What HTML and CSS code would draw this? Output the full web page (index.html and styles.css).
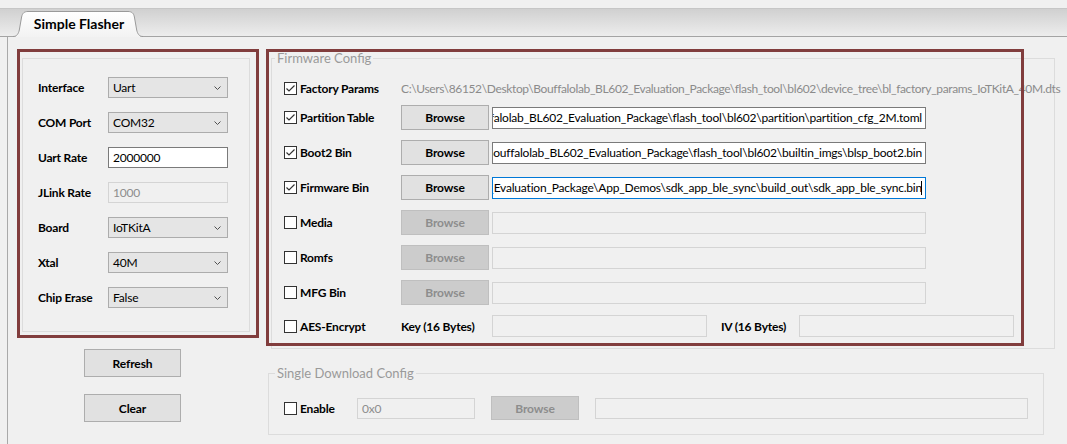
FILE: index.html
```html
<!DOCTYPE html>
<html lang="en">
<head>
<meta charset="utf-8">
<title>Simple Flasher</title>
<link rel="stylesheet" href="styles.css">
</head>
<body>
<div class="tabbar">
  <div class="tab">
    <svg class="tab-shape" width="130" height="26" viewBox="0 0 130 26">
      <defs>
        <linearGradient id="tg" x1="0" y1="0" x2="0" y2="1">
          <stop offset="0" stop-color="#ffffff"/>
          <stop offset="1" stop-color="#f2f2f2"/>
        </linearGradient>
      </defs>
      <path d="M0 26 C4 26 5.5 22.5 6.3 19 L8.6 6 C9.4 2 11.5 0.5 15 0.5 L115 0.5 C118.5 0.5 120.6 2 121.4 6 L123.7 19 C124.5 22.5 126 26 130 26 Z" fill="url(#tg)"/>
      <path d="M0 25.5 C4 25.5 5.5 22.5 6.3 19 L8.6 6 C9.4 2 11.5 0.5 15 0.5 L115 0.5 C118.5 0.5 120.6 2 121.4 6 L123.7 19 C124.5 22.5 126 25.5 130 25.5" fill="none" stroke="#9a9a9a"/>
    </svg>
    <span class="tab-label">Simple Flasher</span>
  </div>
</div>

<div class="pane">
  <div class="left-col">
    <div class="mark-box">
      <div class="group settings">
        <div class="field"><span class="lbl">Interface</span><div class="combo"><span>Uart</span><svg class="chev" width="7" height="4" viewBox="0 0 7 4"><polyline points="0.5,0.5 3.5,3.5 6.5,0.5"/></svg></div></div>
        <div class="field"><span class="lbl">COM Port</span><div class="combo"><span>COM32</span><svg class="chev" width="7" height="4" viewBox="0 0 7 4"><polyline points="0.5,0.5 3.5,3.5 6.5,0.5"/></svg></div></div>
        <div class="field"><span class="lbl">Uart Rate</span><div class="inp combo-w"><span class="txt">2000000</span></div></div>
        <div class="field"><span class="lbl">JLink Rate</span><div class="inp combo-w disabled"><span class="txt">1000</span></div></div>
        <div class="field"><span class="lbl">Board</span><div class="combo"><span>IoTKitA</span><svg class="chev" width="7" height="4" viewBox="0 0 7 4"><polyline points="0.5,0.5 3.5,3.5 6.5,0.5"/></svg></div></div>
        <div class="field"><span class="lbl">Xtal</span><div class="combo"><span>40M</span><svg class="chev" width="7" height="4" viewBox="0 0 7 4"><polyline points="0.5,0.5 3.5,3.5 6.5,0.5"/></svg></div></div>
        <div class="field"><span class="lbl">Chip Erase</span><div class="combo"><span>False</span><svg class="chev" width="7" height="4" viewBox="0 0 7 4"><polyline points="0.5,0.5 3.5,3.5 6.5,0.5"/></svg></div></div>
      </div>
    </div>
    <div class="actions">
      <button class="btn">Refresh</button>
      <button class="btn">Clear</button>
    </div>
  </div>

  <div class="right-col">
    <div class="group fw">
      <div class="group-title">Firmware Config</div>
      <div class="fw-body">
        <div class="row row-first">
          <div class="chk"><span class="box"><svg width="11" height="11" viewBox="0 0 11 11"><polyline points="1.5,5.5 4,8 9.5,2.5"/></svg></span><span class="chk-lbl">Factory Params</span></div>
          <span class="path-text">C:\Users\86152\Desktop\Bouffalolab_BL602_Evaluation_Package\flash_tool\bl602\device_tree\bl_factory_params_IoTKitA_40M.dts</span>
        </div>
        <div class="row">
          <div class="chk"><span class="box"><svg width="11" height="11" viewBox="0 0 11 11"><polyline points="1.5,5.5 4,8 9.5,2.5"/></svg></span><span class="chk-lbl">Partition Table</span></div>
          <button class="btn browse">Browse</button>
          <div class="inp path"><span class="txt">C:\Users\86152\Desktop\Bouffalolab_BL602_Evaluation_Package\flash_tool\bl602\partition\partition_cfg_2M.toml</span></div>
        </div>
        <div class="row">
          <div class="chk"><span class="box"><svg width="11" height="11" viewBox="0 0 11 11"><polyline points="1.5,5.5 4,8 9.5,2.5"/></svg></span><span class="chk-lbl">Boot2 Bin</span></div>
          <button class="btn browse">Browse</button>
          <div class="inp path"><span class="txt">C:\Users\86152\Desktop\Bouffalolab_BL602_Evaluation_Package\flash_tool\bl602\builtin_imgs\blsp_boot2.bin</span></div>
        </div>
        <div class="row">
          <div class="chk"><span class="box"><svg width="11" height="11" viewBox="0 0 11 11"><polyline points="1.5,5.5 4,8 9.5,2.5"/></svg></span><span class="chk-lbl">Firmware Bin</span></div>
          <button class="btn browse">Browse</button>
          <div class="inp path focus"><span class="txt">C:\Users\86152\Desktop\Bouffalolab_BL602_Evaluation_Package\App_Demos\sdk_app_ble_sync\build_out\sdk_app_ble_sync.bin</span><span class="caret"></span></div>
        </div>
        <div class="row">
          <div class="chk"><span class="box"></span><span class="chk-lbl">Media</span></div>
          <button class="btn browse off">Browse</button>
          <div class="inp path disabled"></div>
        </div>
        <div class="row">
          <div class="chk"><span class="box"></span><span class="chk-lbl">Romfs</span></div>
          <button class="btn browse off">Browse</button>
          <div class="inp path disabled"></div>
        </div>
        <div class="row">
          <div class="chk"><span class="box"></span><span class="chk-lbl">MFG Bin</span></div>
          <button class="btn browse off">Browse</button>
          <div class="inp path disabled"></div>
        </div>
        <div class="row row-aes">
          <div class="chk"><span class="box"></span><span class="chk-lbl">AES-Encrypt</span></div>
          <span class="key-lbl">Key (16 Bytes)</span>
          <div class="inp key disabled"></div>
          <span class="iv-lbl">IV (16 Bytes)</span>
          <div class="inp key disabled"></div>
        </div>
      </div>
      <div class="mark-overlay"></div>
    </div>

    <div class="group single">
      <div class="group-title">Single Download Config</div>
      <div class="single-body">
        <div class="row row-single">
          <div class="chk chk-single"><span class="box"></span><span class="chk-lbl">Enable</span></div>
          <div class="inp addr disabled"><span class="txt">0x0</span></div>
          <button class="btn browse off">Browse</button>
          <div class="inp spath disabled"></div>
        </div>
      </div>
    </div>
  </div>
</div>
</body>
</html>
```

FILE: styles.css
```css
* { box-sizing: border-box; }

html, body {
  margin: 0;
  padding: 0;
  background: #f0f0f0;
  overflow: hidden;
}

body {
  font-family: Lato, "Liberation Sans", sans-serif;
  font-size: 12px;
  letter-spacing: -0.2px;
  color: #000;
  width: 1067px;
  height: 444px;
}

/* ---------- tab bar ---------- */
.tabbar {
  margin-top: 8px;
  height: 29px;
  border-top: 1px solid #c6c6c6;
  border-bottom: 1px solid #a4a4a4;
  background: linear-gradient(#d0d0d0, #ededed);
  display: flex;
  align-items: flex-end;
  padding-left: 13px;
}

.tab {
  position: relative;
  width: 130px;
  height: 26px;
  margin-bottom: -1px;
  display: flex;
  align-items: center;
  justify-content: center;
}

.tab-shape {
  position: absolute;
  left: 0;
  top: 0;
}

.tab-label {
  position: relative;
  font-weight: 700;
  font-size: 14px;
  letter-spacing: 0;
  padding-bottom: 2px;
  margin-left: 2px;
}

/* ---------- pane ---------- */
.pane {
  margin-left: 7px;
  border-left: 1px solid #a9a9a9;
  height: 407px;
  display: flex;
  align-items: flex-start;
  padding: 12px 0 0 9px;
  gap: 12px;
}

.left-col {
  width: 242px;
  flex: none;
}

.mark-box {
  border: 3px solid #813d3d;
  padding: 6px 6px 3px 2px;
}

.group {
  border: 1px solid #dcdcdc;
}

.settings {
  width: 228px;
  padding: 18px 0 23px 15px;
  display: flex;
  flex-direction: column;
  gap: 14px;
}

.field {
  display: flex;
  align-items: center;
  height: 21px;
}

.lbl {
  width: 70px;
  font-weight: 700;
}

.combo {
  width: 120px;
  height: 21px;
  background: #e5e5e5;
  border: 1px solid #acacac;
  display: flex;
  align-items: center;
  justify-content: space-between;
  padding: 0 6px 0 4px;
}

.chev polyline {
  fill: none;
  stroke: #505050;
  stroke-width: 1;
}

.inp {
  height: 21px;
  background: #fff;
  border: 1px solid #7a7a7a;
  display: flex;
  align-items: center;
  overflow: hidden;
  white-space: nowrap;
  padding: 0 4px;
}

.inp .txt { flex: none; }

.inp.disabled {
  background: #f0f0f0;
  border-color: #d4d4d4;
  color: #8d8d8d;
}

.combo-w { width: 120px; }

.actions {
  margin-top: 11px;
  padding-left: 67px;
  display: flex;
  flex-direction: column;
  gap: 17px;
}

.btn {
  font-family: inherit;
  font-size: 12px;
  font-weight: 700;
  letter-spacing: -0.1px;
  color: #000;
  background: #e1e1e1;
  border: 1px solid #adadad;
  border-radius: 0;
  width: 97px;
  height: 28px;
  padding: 0;
}

/* ---------- right column ---------- */
.right-col {
  flex: none;
  margin-top: 9px;
  width: 784px;
}

.group-title {
  width: fit-content;
  margin: -8px 0 0 3px;
  padding: 0 2px;
  background: #f0f0f0;
  line-height: 15px;
  font-size: 13px;
  letter-spacing: 0;
  color: #9a9a9a;
}

.fw {
  position: relative;
  width: 784px;
}

.fw-body {
  padding: 12px 0 11px 12px;
}

.row {
  display: flex;
  align-items: center;
  height: 25px;
  margin-bottom: 10px;
}

.row-first {
  height: 20px;
  margin-bottom: 7px;
}

.row-aes {
  height: 22px;
  margin-bottom: 0;
}

.chk {
  width: 117px;
  flex: none;
  display: flex;
  align-items: center;
}

.box {
  width: 13px;
  height: 13px;
  border: 1px solid #333;
  background: #fff;
  margin-right: 3px;
  display: flex;
}

.box polyline {
  fill: none;
  stroke: #333;
  stroke-width: 1.2;
}

.chk-lbl {
  font-weight: 700;
}

.path-text {
  white-space: nowrap;
  color: #8b8b8b;
  letter-spacing: -0.36px;
}

.browse {
  width: 88px;
  height: 25px;
  margin-right: 3px;
  flex: none;
}

.browse.off {
  background: #cccccc;
  border-color: #bfbfbf;
  color: #8d8d8d;
}

.path {
  width: 434px;
  height: 22px;
  justify-content: flex-end;
  padding: 0 3px 0 0;
}

.path.focus {
  border-color: #0078d7;
}

.caret {
  flex: none;
  width: 1px;
  height: 14px;
  background: #000;
  margin-left: -1px;
}

.key-lbl {
  width: 91px;
  flex: none;
  font-weight: 700;
}

.key {
  width: 215px;
  height: 22px;
  flex: none;
}

.iv-lbl {
  width: 78px;
  margin-left: 14px;
  flex: none;
  font-weight: 700;
}

.mark-overlay {
  position: absolute;
  left: -6px;
  top: -10px;
  width: 758px;
  height: 297px;
  border: 3px solid #813d3d;
  pointer-events: none;
}

/* ---------- single download ---------- */
.single {
  width: 776px;
  margin: 24px 0 0 -3px;
}

.single .group-title {
  margin-left: 6px;
}

.single-body {
  padding: 15px 0 14px 15px;
}

.row-single {
  height: 24px;
  margin-bottom: 0;
}

.chk-single {
  width: 73px;
}

.addr {
  width: 118px;
  flex: none;
}

.row-single .browse {
  height: 24px;
  margin: 0 16px;
}

.spath {
  width: 433px;
  flex: none;
}
```
